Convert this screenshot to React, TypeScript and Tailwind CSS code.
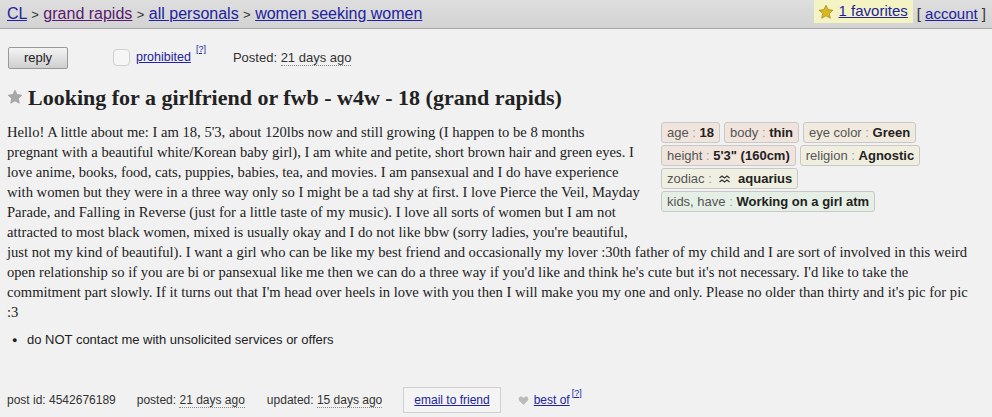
import React from 'react';

const linkCls = 'text-[#2222a0] underline';

const Star = ({ fill, stroke, size = 16 }: { fill: string; stroke: string; size?: number }) => (
  <svg width={size} height={size} viewBox="0 0 24 24">
    <path
      d="M12 1.8l3.1 6.6 7.2.9-5.3 4.9 1.4 7.1L12 17.8l-6.4 3.5 1.4-7.1-5.3-4.9 7.2-.9z"
      fill={fill}
      stroke={stroke}
      strokeWidth="1"
      strokeLinejoin="round"
    />
  </svg>
);

// aquarius sign: two zigzag lines
const Aquarius = () => (
  <svg width="11" height="8" viewBox="0 0 11 8" className="mx-[4px]">
    <path d="M0.5 3l2.5-2 2.5 2 2.5-2 2.5 2M0.5 7l2.5-2 2.5 2 2.5-2 2.5 2" fill="none" stroke="#333" strokeWidth="1.3" />
  </svg>
);

const Attr = ({ label, value, bg }: { label: string; value: React.ReactNode; bg: string }) => (
  <span className={`h-[21px] flex items-center px-[5px] border border-[#c8c8c8] rounded-[3px] ${bg}`}>
    {label}&nbsp;<span className="text-[#999]">:</span>&nbsp;<b className="flex items-center text-[#222]">{value}</b>
  </span>
);

export default function App() {
  return (
    <div className="min-h-[417px] bg-[#f1f1f1] text-[#222]" style={{ fontFamily: '"Liberation Sans", Arial, sans-serif' }}>
      {/* header bar */}
      <header className="h-[29px] flex items-start justify-between pl-[7px] pr-[6px] bg-gradient-to-b from-[#dedede] to-[#d3d3d3] border-b border-[#a8a8a8] text-[16px]">
        <div className="pt-[2px] text-[#333]">
          <a className={linkCls}>CL</a> <span className="text-[13px]">&gt;</span>{' '}
          <a className="text-[#5a1a6e] underline">grand rapids</a> <span className="text-[13px]">&gt;</span>{' '}
          <a className={linkCls}>all personals</a> <span className="text-[13px]">&gt;</span>{' '}
          <a className={linkCls}>women seeking women</a>
        </div>
        <div className="flex items-start text-[15px]">
          <div className="flex items-center gap-[5px] h-[23px] pl-[4px] pr-[5px] bg-[#f3f3c4]">
            <Star fill="#d8b820" stroke="#a08010" size={16} />
            <a className={linkCls}>1 favorites</a>
          </div>
          <div className="pt-[3px] pl-[4px] text-[#333]">
            [ <a className={linkCls}>account</a> ]
          </div>
        </div>
      </header>

      <main className="px-[7px]">
        {/* action row */}
        <div className="flex items-center h-[23px] mt-[17px] text-[13px]">
          <button className="w-[60px] h-[22px] ml-[1px] border border-[#999] rounded-[2px] bg-gradient-to-b from-[#f4f4f4] to-[#cfcfcf] text-[13px] text-[#222]">
            reply
          </button>
          <span className="ml-[45px] w-[17px] h-[17px] rounded-[4px] border border-[#cfcfcf] bg-[#f6f6f6]" />
          <a className={`ml-[6px] ${linkCls} text-[12.5px]`}>prohibited</a>
          <sup className="ml-[5px] -mt-[8px] text-[9px] underline text-[#2222a0]">[?]</sup>
          <span className="ml-[27px] text-[#333]">
            Posted: <span className="border-b border-dotted border-[#888]">21 days ago</span>
          </span>
        </div>

        {/* title */}
        <h2
          className="flex items-center h-[26px] mt-[15px] text-[22px] font-bold text-[#222]"
          style={{ fontFamily: '"Liberation Serif", "Times New Roman", serif' }}
        >
          <Star fill="#a8a8a8" stroke="#999" size={16} />
          <span className="ml-[5px]">Looking for a girlfriend or fwb - w4w - 18 (grand rapids)</span>
        </h2>

        {/* body */}
        <section className="mt-[12px]">
          <div className="float-right w-[324px] ml-[4px] flex flex-wrap gap-x-[4px] gap-y-[2px] text-[13px] text-[#555]">
            <Attr label="age" value="18" bg="bg-[#f1e4dc]" />
            <Attr label="body" value="thin" bg="bg-[#f1e4dc]" />
            <Attr label="eye color" value="Green" bg="bg-[#f1eade]" />
            <Attr label="height" value={'5\'3" (160cm)'} bg="bg-[#f1e4dc]" />
            <Attr label="religion" value="Agnostic" bg="bg-[#f0efdf]" />
            <Attr
              label="zodiac"
              value={
                <>
                  <Aquarius />
                  &nbsp;aquarius
                </>
              }
              bg="bg-[#f0f0e2]"
            />
            <Attr label="kids, have" value="Working on a girl atm" bg="bg-[#e5efe5]" />
          </div>
          <div
            className="text-[14.6px] leading-[20px] text-[#222]"
            style={{ fontFamily: '"Liberation Serif", "Times New Roman", serif' }}
          >
            Hello! A little about me: I am 18, 5'3, about 120lbs now and still growing (I happen to be 8 months
            <br />
            pregnant with a beautiful white/Korean baby girl), I am white and petite, short brown hair and green eyes. I
            <br />
            love anime, books, food, cats, puppies, babies, tea, and movies. I am pansexual and I do have experience
            <br />
            with women but they were in a three way only so I might be a tad shy at first. I love Pierce the Veil, Mayday
            <br />
            Parade, and Falling in Reverse (just for a little taste of my music). I love all sorts of women but I am not
            <br />
            attracted to most black women, mixed is usually okay and I do not like bbw (sorry ladies, you're beautiful,
            <br />
            just not my kind of beautiful). I want a girl who can be like my best friend and occasionally my lover :30th father of my child and I are sort of involved in this weird
            <br />
            open relationship so if you are bi or pansexual like me then we can do a three way if you'd like and think he's cute but it's not necessary. I'd like to take the
            <br />
            commitment part slowly. If it turns out that I'm head over heels in love with you then I will make you my one and only. Please no older than thirty and it's pic for pic
            <br />
            :3
          </div>
        </section>

        <ul className="mt-[10px] ml-[5px] text-[13px] leading-[16px] text-[#222]">
          <li className="flex items-center">
            <span className="w-[15px] text-[9px]">●</span>do NOT contact me with unsolicited services or offers
          </li>
        </ul>

        {/* footer */}
        <footer className="flex items-center h-[26px] mt-[39px] text-[12px] text-[#333]">
          <span>post id: 4542676189</span>
          <span className="ml-[21px]">
            posted: <span className="border-b border-dotted border-[#888]">21 days ago</span>
          </span>
          <span className="ml-[22px]">
            updated: <span className="border-b border-dotted border-[#888]">15 days ago</span>
          </span>
          <span className="ml-[21px] px-[10px] h-[26px] flex items-center border border-[#d0d0d0] bg-[#f4f4f4]">
            <a className={linkCls}>email to friend</a>
          </span>
          <span className="ml-[17px] flex items-center">
            <svg width="11" height="11" viewBox="0 0 24 24">
              <path d="M12 22l-9-9.5C0 9 1.5 3 6.5 3c2.6 0 4.2 1.5 5.5 3.5C13.3 4.5 14.9 3 17.5 3 22.5 3 24 9 21 12.5z" fill="#bbb" />
            </svg>
            <a className={`ml-[5px] ${linkCls}`}>best of</a>
            <sup className="ml-[2px] -mt-[6px] text-[9px] underline text-[#2222a0]">[?]</sup>
          </span>
        </footer>
      </main>
    </div>
  );
}
